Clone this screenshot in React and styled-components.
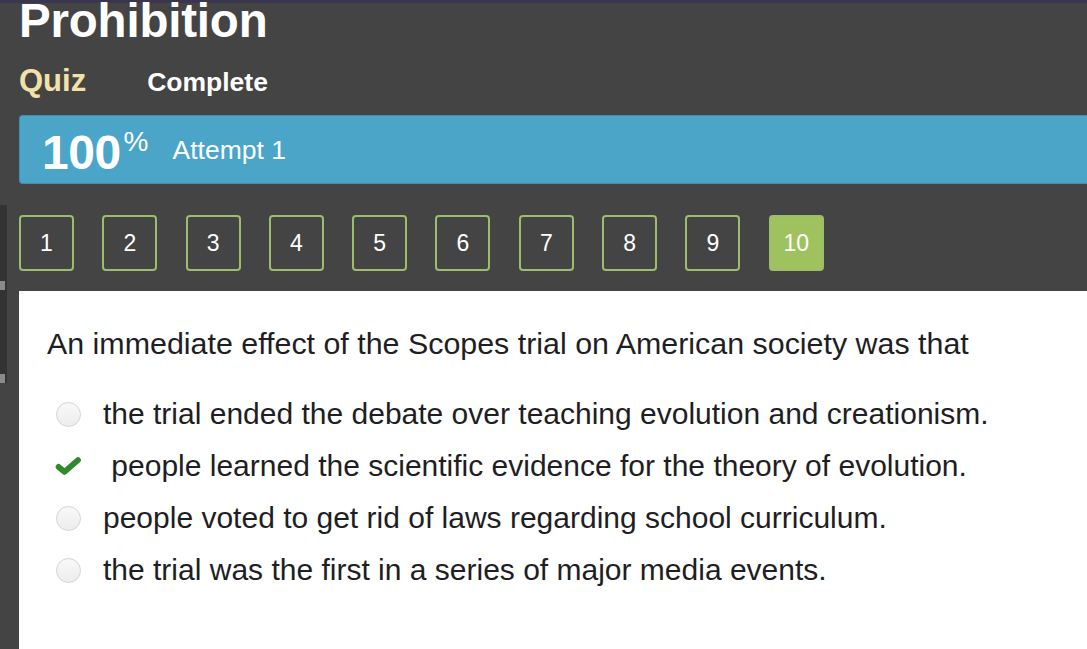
import React from 'react'
import styled, { createGlobalStyle } from 'styled-components'

const GlobalStyle = createGlobalStyle`
  html, body {
    margin: 0;
    padding: 0;
    background: #444444;
    font-family: "Liberation Sans", Arial, Helvetica, sans-serif;
    overflow: hidden;
  }
`

const questions = ['1', '2', '3', '4', '5', '6', '7', '8', '9', '10']

const choices = [
  { text: 'the trial ended the debate over teaching evolution and creationism.' },
  { text: ' people learned the scientific evidence for the theory of evolution.', correct: true },
  { text: 'people voted to get rid of laws regarding school curriculum.' },
  { text: 'the trial was the first in a series of major media events.' },
]

function Check() {
  return (
    <svg width="30" height="22" viewBox="0 0 30 22">
      <path d="M4 12 L10.5 17.5 L25.5 4.5" fill="none" stroke="#2f8a2a" strokeWidth="6.5" strokeLinecap="round" strokeLinejoin="round" />
    </svg>
  )
}

export default function App() {
  return (
    <Page>
      <GlobalStyle />
      <TopEdge />
      <Layout>
        <Gutter>
          <Rail>
            <RailMark />
            <RailMark />
          </Rail>
        </Gutter>
        <Main>
          <Title>Prohibition</Title>
          <Tabs>
            <Tab $active>Quiz</Tab>
            <Tab>Complete</Tab>
          </Tabs>
          <ScoreBar>
            <Score>100<sup>%</sup></Score>
            <Attempt>Attempt 1</Attempt>
          </ScoreBar>
          <Pager>
            {questions.map((q) => (
              <PageButton key={q} $current={q === '10'}>{q}</PageButton>
            ))}
          </Pager>
          <Panel>
            <Question>An immediate effect of the Scopes trial on American society was that</Question>
            <Choices>
              {choices.map((c) => (
                <Choice key={c.text}>
                  <Mark>{c.correct ? <Check /> : <Radio />}</Mark>
                  <ChoiceText>{c.text}</ChoiceText>
                </Choice>
              ))}
            </Choices>
          </Panel>
        </Main>
      </Layout>
    </Page>
  )
}

const Page = styled.div`
  width: 1087px;
  height: 649px;
  overflow: hidden;
  background: #444444;
  display: flex;
  flex-direction: column;
`

const TopEdge = styled.div`
  height: 3px;
  background: #3b3550;
  flex-shrink: 0;
`

const Layout = styled.div`
  flex: 1;
  display: flex;
`

const Gutter = styled.div`
  width: 19px;
  flex-shrink: 0;
`

const Rail = styled.div`
  margin-top: 202px;
  width: 7px;
  height: 178px;
  background: #333333;
  display: flex;
  flex-direction: column;
  justify-content: space-between;
  padding: 76px 0 0;
  box-sizing: border-box;
`

const RailMark = styled.div`
  width: 5px;
  height: 9px;
  background: #8a8a8a;
`

const Main = styled.div`
  flex: 1;
  display: flex;
  flex-direction: column;
  min-width: 0;
`

const Title = styled.h1`
  margin: 0;
  font-size: 47.5px;
  line-height: 36px;
  font-weight: 700;
  color: #ffffff;
  letter-spacing: -0.2px;
`

const Tabs = styled.div`
  display: flex;
  align-items: baseline;
  gap: 61px;
  margin-top: 24px;
  height: 40px;
`

const Tab = styled.span`
  font-weight: 700;
  font-size: ${(p) => (p.$active ? '31px' : '26.5px')};
  color: ${(p) => (p.$active ? '#f3e2a8' : '#ffffff')};
`

const ScoreBar = styled.div`
  margin-top: 12px;
  height: 69px;
  box-sizing: border-box;
  background: #4aa5c9;
  border: 1px solid #3f8fae;
  border-right: none;
  border-radius: 4px 0 0 4px;
  display: flex;
  align-items: center;
  padding-left: 22px;
  gap: 24px;
  color: #ffffff;
`

const Score = styled.div`
  font-size: 48px;
  font-weight: 700;
  letter-spacing: -0.5px;
  line-height: 1;
  margin-top: 6px;
  sup {
    font-size: 28px;
    font-weight: 400;
    vertical-align: 18px;
    margin-left: 3px;
    letter-spacing: 0;
  }
`

const Attempt = styled.div`
  font-size: 26.5px;
  margin-top: 2px;
`

const Pager = styled.div`
  display: flex;
  gap: 28.3px;
  margin-top: 31px;
  height: 76px;
`

const PageButton = styled.div`
  width: 55px;
  height: 56px;
  box-sizing: border-box;
  border: 2px solid #9dbd6c;
  border-radius: 4px;
  background: ${(p) => (p.$current ? '#9fc25f' : 'transparent')};
  color: #ffffff;
  font-size: 23px;
  display: flex;
  align-items: center;
  justify-content: center;
`

const Panel = styled.div`
  flex: 1;
  background: #ffffff;
  padding: 35px 0 0 28px;
`

const Question = styled.p`
  margin: 0;
  font-size: 30.4px;
  color: #1e1e24;
  line-height: 34px;
`

const Choices = styled.div`
  margin-top: 28px;
  display: flex;
  flex-direction: column;
`

const Choice = styled.div`
  display: flex;
  align-items: center;
  height: 52px;
  padding-left: 8px;
`

const Mark = styled.div`
  width: 27px;
  height: 27px;
  display: flex;
  align-items: center;
  justify-content: center;
  margin-right: 21px;
`

const Radio = styled.div`
  width: 25px;
  height: 25px;
  box-sizing: border-box;
  border-radius: 50%;
  border: 1.5px solid #d4d4d4;
  background: linear-gradient(#f8f8f8, #ededed);
`

const ChoiceText = styled.span`
  font-size: 30px;
  color: #1e1e24;
  white-space: pre;
`
